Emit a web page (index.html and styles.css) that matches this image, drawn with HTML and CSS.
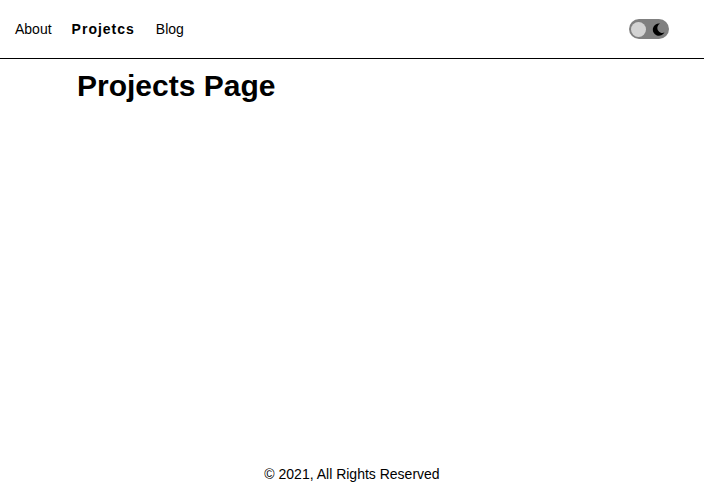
FILE: index.html
```html
<!DOCTYPE html>
<html lang="en">
<head>
<meta charset="utf-8">
<title>Projects</title>
<link rel="stylesheet" href="styles.css">
</head>
<body>
<header class="site-header">
  <nav class="nav">
    <a class="nav-link" href="#">About</a>
    <a class="nav-link active" href="#">Projetcs</a>
    <a class="nav-link" href="#">Blog</a>
  </nav>
  <div class="toggle">
    <span class="knob"></span>
    <svg class="moon" viewBox="0 0 12 12" width="13" height="13"><path d="M7.4 0.5 A5.7 5.7 0 1 0 11.6 8.6 A4.4 4.4 0 0 1 7.4 0.5 Z" fill="#000"/></svg>
  </div>
</header>
<main class="content">
  <h1 class="title">Projects Page</h1>
</main>
<footer class="footer">© 2021, All Rights Reserved</footer>
</body>
</html>
```
FILE: styles.css
```css
html, body {
  margin: 0;
  height: 100%;
}
body {
  font-family: "Liberation Sans", Arial, sans-serif;
  color: #000;
  background: #fff;
  display: flex;
  flex-direction: column;
  min-height: 100vh;
}
.site-header {
  height: 59px;
  border-bottom: 1px solid #000;
  display: flex;
  align-items: center;
  justify-content: space-between;
  padding: 0 35px 0 15px;
  box-sizing: border-box;
  flex-shrink: 0;
}
.nav {
  display: flex;
  gap: 20px;
  font-size: 14px;
}
.nav-link {
  color: #000;
  text-decoration: none;
}
.nav-link.active {
  font-weight: bold;
  letter-spacing: 1px;
  margin-right: 1px;
}
.toggle {
  width: 40px;
  height: 20px;
  border-radius: 10px;
  background: #808080;
  display: flex;
  align-items: center;
  justify-content: space-between;
  padding: 0 4px 0 2px;
  box-sizing: border-box;
}
.knob {
  width: 15px;
  height: 15px;
  border-radius: 50%;
  background: #d3d3d3;
}
.moon {
  display: block;
}
.content {
  flex: 1;
  padding-left: 77px;
}
.title {
  margin: 10px 0 0;
  font-size: 30px;
  font-weight: bold;
}
.footer {
  text-align: center;
  font-size: 14px;
  padding-bottom: 6px;
}
```
